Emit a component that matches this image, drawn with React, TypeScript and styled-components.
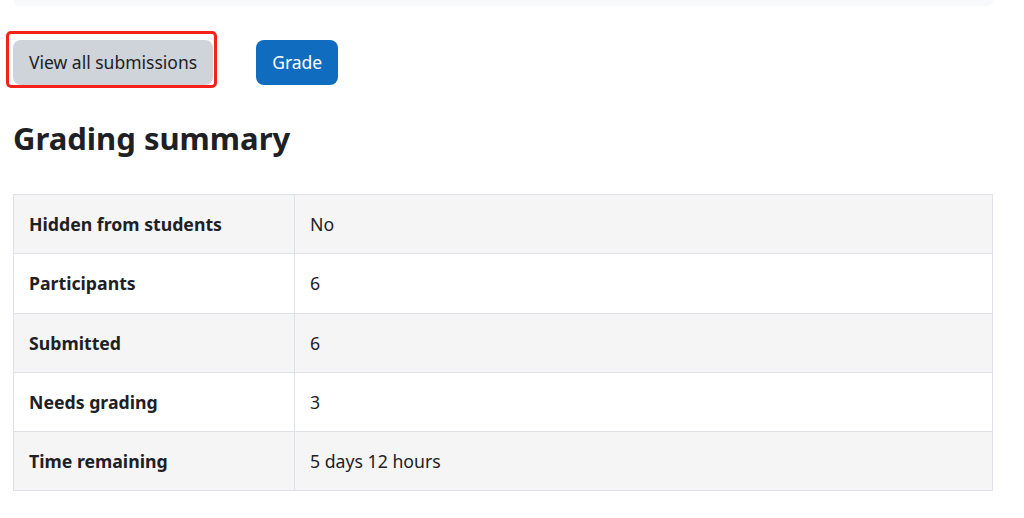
import * as React from "react";
import styled, { createGlobalStyle } from "styled-components";

const rows: { label: string; value: string }[] = [
  { label: "Hidden from students", value: "No" },
  { label: "Participants", value: "6" },
  { label: "Submitted", value: "6" },
  { label: "Needs grading", value: "3" },
  { label: "Time remaining", value: "5 days 12 hours" },
];

export default function App() {
  return (
    <>
      <GlobalStyle />
      <Page>
        <CardEdge />
        <Actions>
          <Highlight>
            <Button kind="secondary">View all submissions</Button>
          </Highlight>
          <Button kind="primary">Grade</Button>
        </Actions>
        <Heading>Grading summary</Heading>
        <Table>
          <tbody>
            {rows.map((row) => (
              <tr key={row.label}>
                <Th scope="row">{row.label}</Th>
                <Td>{row.value}</Td>
              </tr>
            ))}
          </tbody>
        </Table>
      </Page>
    </>
  );
}

const GlobalStyle = createGlobalStyle`
  html, body {
    margin: 0;
    background: #fff;
  }
  body {
    font-family: "Noto Sans", "Open Sans", sans-serif;
    color: #1d2125;
  }
`;

const Page = styled.main`
  width: 980px;
  padding: 0 0 0 13px;
`;

const CardEdge = styled.div`
  height: 6px;
  margin-left: 1px;
  background: #f8f9fa;
  border-radius: 0 0 10px 10px;
`;

const Actions = styled.div`
  display: flex;
  align-items: center;
  gap: 43px;
  margin-top: 34px;
`;

const Highlight = styled.div`
  position: relative;
  display: flex;

  &::after {
    content: "";
    position: absolute;
    left: -7px;
    top: -9px;
    right: -4px;
    bottom: -3px;
    border: 3px solid #f5221b;
    border-radius: 5px;
    pointer-events: none;
  }
`;

const Button = styled.button<{ kind: "primary" | "secondary" }>`
  height: 45px;
  padding: 0 16px;
  border: none;
  border-radius: 8px;
  font-family: inherit;
  font-size: 17.5px;
  line-height: 1;
  background: ${(p) => (p.kind === "primary" ? "#0f6cbf" : "#ced4da")};
  color: ${(p) => (p.kind === "primary" ? "#fff" : "#1d2125")};
  cursor: pointer;
`;

const Heading = styled.h2`
  margin: 35px 0 0;
  font-size: 31px;
  font-weight: 700;
  line-height: 1.2;
`;

const Table = styled.table`
  width: 980px;
  margin-top: 37px;
  border-collapse: collapse;
  font-size: 17.7px;

  tr:nth-child(odd) {
    background: #f5f5f5;
  }
`;

const Th = styled.th`
  width: 250px;
  height: 58.2px;
  padding: 0 15px;
  text-align: left;
  font-weight: 700;
  border: 1px solid #dee2e6;
`;

const Td = styled.td`
  height: 58.2px;
  padding: 0 15px;
  border: 1px solid #dee2e6;
`;
